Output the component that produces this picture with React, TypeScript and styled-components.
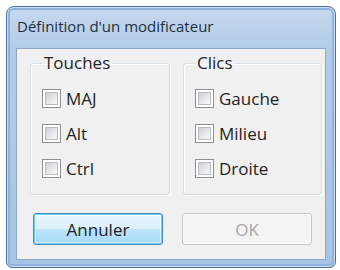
import React from "react";
import styled, { createGlobalStyle } from "styled-components";

const GlobalStyle = createGlobalStyle`
  html, body {
    margin: 0;
    padding: 0;
    background: #ffffff;
  }
  body {
    width: 340px;
    height: 270px;
    overflow: hidden;
    font-family: "Open Sans", "Liberation Sans", sans-serif;
  }
`;

const keys = ["MAJ", "Alt", "Ctrl"];
const clicks = ["Gauche", "Milieu", "Droite"];

const Page = styled.div`
  padding: 6px 0 0 6px;
`;

const Window = styled.div`
  box-sizing: border-box;
  width: 330px;
  height: 262px;
  display: flex;
  flex-direction: column;
  border: 1px solid #4f729b;
  border-radius: 8px 8px 6px 6px;
  background: linear-gradient(to bottom, #c6d9ee 0px, #b3cce8 40px, #a8c4e4 100%);
  box-shadow: inset 0 0 0 1px rgba(255, 255, 255, 0.55), inset 0 0 0 3px #8fb3dc;
`;

const TitleBar = styled.div`
  height: 41px;
  box-sizing: border-box;
  padding: 9px 0 0 10px;
  font-size: 15px;
  line-height: 20px;
  color: #1c3040;
  white-space: nowrap;
`;

const Client = styled.div`
  flex: 1;
  margin: 0 9px 7px 9px;
  border: 1px solid #8fa8c6;
  background: #f0f0f0;
  padding: 4px 4px 0 13px;
`;

const Groups = styled.div`
  display: grid;
  grid-template-columns: 140px 139px;
  column-gap: 13px;
`;

const Group = styled.fieldset`
  margin: 0;
  padding: 8px 0 8px 11px;
  border: 1px solid #d5dfe5;
  border-radius: 3px;
  box-shadow: inset 1px 1px 0 #ffffff, 1px 1px 0 #ffffff;
  min-width: 0;
`;

const Legend = styled.legend`
  margin-left: 0;
  padding: 0 2px;
  font-size: 17px;
  line-height: 20px;
  color: #242424;
`;

const Row = styled.label`
  display: flex;
  align-items: center;
  gap: 5px;
  height: 35px;
  font-size: 17px;
  color: #242424;
`;

const Box = styled.span`
  box-sizing: border-box;
  width: 19px;
  height: 19px;
  padding: 2px;
  border: 1px solid #8e8f8f;
  background: #ffffff;
  display: flex;
`;

const BoxInner = styled.span`
  flex: 1;
  border: 1px solid #b9bdc2;
  background: linear-gradient(135deg, #cdd1d6 0%, #e6e8ea 55%, #f7f7f7 100%);
`;

const Buttons = styled.div`
  display: flex;
  gap: 19px;
  margin: 18px 0 0 3px;
`;

const Button = styled.div<{ $primary?: boolean; $disabled?: boolean }>`
  box-sizing: border-box;
  width: 130px;
  height: 32px;
  display: flex;
  align-items: center;
  justify-content: center;
  border-radius: 3px;
  font-size: 17px;
  border: 1px solid ${(p) => (p.$primary ? "#3c8fc8" : "#c3c6c9")};
  color: ${(p) => (p.$disabled ? "#a6a6a6" : "#222222")};
  background: ${(p) =>
    p.$primary
      ? "linear-gradient(to bottom, #eaf6fd 0%, #d9f0fc 50%, #bee6fd 51%, #a7d9f5 100%)"
      : "#f4f4f4"};
  box-shadow: ${(p) =>
    p.$primary ? "inset 0 0 0 1px #6fd0f7, inset 0 0 0 2px rgba(255,255,255,0.5)" : "inset 0 0 0 1px #fbfbfb"};
`;

const CheckRow = ({ label }: { label: string }) => (
  <Row>
    <Box>
      <BoxInner />
    </Box>
    {label}
  </Row>
);

const App = () => {
  return (
    <>
      <GlobalStyle />
      <Page>
        <Window>
          <TitleBar>Définition d'un modificateur</TitleBar>
          <Client>
            <Groups>
              <Group>
                <Legend>Touches</Legend>
                {keys.map((k) => (
                  <CheckRow key={k} label={k} />
                ))}
              </Group>
              <Group>
                <Legend>Clics</Legend>
                {clicks.map((c) => (
                  <CheckRow key={c} label={c} />
                ))}
              </Group>
            </Groups>
            <Buttons>
              <Button $primary>Annuler</Button>
              <Button $disabled>OK</Button>
            </Buttons>
          </Client>
        </Window>
      </Page>
    </>
  );
};

export default App;
